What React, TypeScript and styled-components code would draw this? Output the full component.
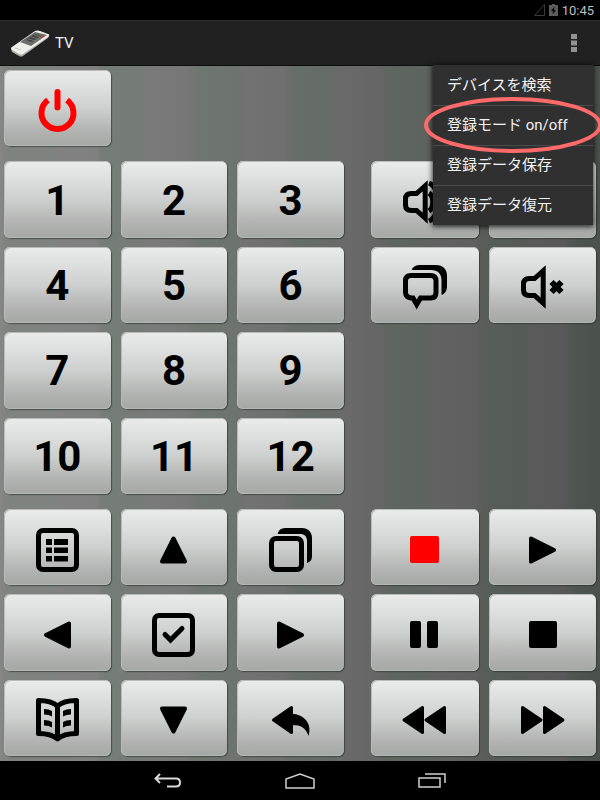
import React from "react";
import styled, { createGlobalStyle } from "styled-components";

const GlobalStyle = createGlobalStyle`
  * { box-sizing: border-box; }
  body {
    margin: 0;
    background: #000;
    font-family: Roboto, "Noto Sans CJK JP", sans-serif;
  }
  button { font-family: inherit; padding: 0; border: 0; background: none; cursor: pointer; }
  svg { display: block; }
`;

const Page = styled.div`
  display: flex;
  flex-direction: column;
  min-height: 100vh;
  overflow: hidden;
`;

const StatusBar = styled.div`
  display: flex;
  align-items: center;
  justify-content: flex-end;
  gap: 4px;
  height: 20px;
  padding-right: 6px;
  background: #000;
  color: #bdbdbd;
  font-size: 13px;
`;

const ActionBar = styled.header`
  position: relative;
  z-index: 1;
  display: flex;
  align-items: center;
  height: 46px;
  padding: 0 14px 0 11px;
  gap: 5px;
  background: #212121;
  border-top: 1px solid #2b2f2f;
  border-bottom: 1px solid #0c0e0d;
`;

const Title = styled.h1`
  flex: 1;
  margin: 0;
  color: #f0f0f0;
  font-size: 15px;
  font-weight: 400;
`;

const OverflowButton = styled.button`
  display: flex;
  align-items: center;
  justify-content: center;
  width: 24px;
  height: 40px;
`;

const Menu = styled.div`
  position: absolute;
  top: 100%;
  right: 7px;
  width: 160px;
  background: #303030;
  box-shadow: 0 1px 5px 1px rgba(0, 0, 0, 0.75);
`;

const MenuItem = styled.button`
  position: relative;
  display: block;
  width: 100%;
  height: 40px;
  padding: 0 0 2px 14px;
  border-top: 1px solid transparent;
  color: #f2f2f2;
  font-size: 15px;
  line-height: 20px;
  text-align: left;
  & + & { border-top-color: #4a4a4a; }
`;

const Ring = styled.svg`
  position: absolute;
  z-index: 1;
  left: -10px;
  top: -10px;
  pointer-events: none;
`;

const Remote = styled.main`
  flex: 1;
  display: flex;
  flex-direction: column;
  gap: 15px;
  padding: 4px 4px 5px;
  background: linear-gradient(
    90deg,
    #868686 0%, #7e837f 1%, #7e837f 8%, #818181 9%, #808080 16%,
    #767c78 17%, #757b77 23%, #7a7a7a 25%, #777777 31%,
    #6f756f 33%, #6d736e 39%, #727272 41%, #6f6f6f 47%,
    #676d68 49%, #656b66 55%, #6a6a6a 57%, #666666 63%,
    #5f655f 65%, #5d635e 71%, #626262 73%, #5f5f5f 79%,
    #575d58 81%, #555b56 87%, #5a5a5a 89%, #585858 94%,
    #4e5550 96%, #4b524d 100%
  );
`;

const Section = styled.section<{ $rows: number }>`
  flex: ${(p) => p.$rows} 0 ${(p) => (p.$rows - 1) * 9}px;
  display: grid;
  grid-template-columns: 340fr 225fr;
  column-gap: 27px;
`;

const Pad = styled.div<{ $cols: number; $rows: number }>`
  display: grid;
  grid-template-columns: repeat(${(p) => p.$cols}, 1fr);
  grid-template-rows: repeat(${(p) => p.$rows}, minmax(60px, 1fr));
  gap: 9px 10px;
`;

const Key = styled.button<{ $icon?: boolean }>`
  display: flex;
  align-items: center;
  justify-content: center;
  padding-top: ${(p) => (p.$icon ? 6 : 2)}px;
  border-radius: 6px;
  background: linear-gradient(#e9ecea, #dcdfdd 24%, #cdd0ce 50%, #b2b3b2 80%, #a4a8a5);
  box-shadow: inset 1px 1px 0 #b9bab9, inset 0 -1px 0 #b4b8b5, 1px 1px 1px rgba(40, 45, 42, 0.6);
  color: #000;
  font-size: 42px;
  line-height: 48px;
  font-weight: 700;
`;

const NavBar = styled.nav`
  display: flex;
  justify-content: center;
  height: 39px;
  background: #000;
`;

const NavButton = styled.button`
  display: flex;
  align-items: center;
  justify-content: center;
  width: 132px;
  height: 39px;
`;

const Glyph = ({ children }: { children: React.ReactNode }) => (
  <svg width="45" height="45" viewBox="0 0 45 45" aria-hidden="true">{children}</svg>
);

const line = { fill: "none", stroke: "#000", strokeWidth: 5 } as const;
const solid = { fill: "#000", stroke: "#000", strokeLinejoin: "round" } as const;

const Triangle = ({ turn }: { turn: number }) => (
  <Glyph>
    <path {...solid} strokeWidth="4" d="M22.5 10.5L34 33.5H11Z" transform={`rotate(${turn} 22.5 22)`} />
  </Glyph>
);

const speaker = (
  <path {...line} d="M23.2 5.8L14.5 13.5H9.5Q3.5 13.5 3.5 19V25Q3.5 30.5 9.5 30.5H14.5L23.2 38.2Z" />
);

const icons = {
  power: (
    <Glyph>
      <path d="M13 11.2A16 16 0 1 0 32 11.2" fill="none" stroke="#f00" strokeWidth="6" />
      <path d="M22.5 3V18.5" stroke="#f00" strokeWidth="6" strokeLinecap="round" />
    </Glyph>
  ),
  volumeUp: (
    <Glyph>
      {speaker}
      <path {...line} d="M27 3C39 8 39 36 27 41M27 13C32 16 32 28 27 31" />
    </Glyph>
  ),
  volumeDown: (
    <Glyph>
      {speaker}
      <path {...line} d="M29 13C34 16 34 28 29 31" />
    </Glyph>
  ),
  mute: (
    <Glyph>
      {speaker}
      <path {...line} strokeWidth="6" d="M31.5 17L41.5 27M41.5 17L31.5 27" />
    </Glyph>
  ),
  chat: (
    <Glyph>
      <path d="M9.5 5C11 1.5 14 0 18 0H34C41 0 45 4 45 11V21C45 26 43 28.5 39.5 30V15C39.5 9 36 5 29 5Z" />
      <path {...line} d="M9 10.5H28.5Q34 10.5 34 16V27.5Q34 33 28.5 33H18.5L14.7 39.5L11 33H9Q3.5 32 3.5 27.5V16Q3.5 10.5 9 10.5Z" />
    </Glyph>
  ),
  list: (
    <Glyph>
      <rect {...line} x="3.5" y="2.5" width="38" height="39" rx="4.5" />
      <path d="M11 11h6v6h-6zM19 11h14v6h-14zM11 19.5h6v5.5h-6zM19 19.5h14v5.5h-14zM11 28h6v5.5h-6zM19 28h14v5.5h-14z" />
    </Glyph>
  ),
  check: (
    <Glyph>
      <rect {...line} x="3.5" y="2.5" width="38" height="39" rx="4.5" />
      <path {...line} strokeLinecap="round" d="M14 21.5L19.5 27L31 15.5" />
    </Glyph>
  ),
  windows: (
    <Glyph>
      <path d="M9.5 6C10.5 2 13 0 17 0H34C40 0 44 4 44 10V28C44 32 42 34 39 35V13C39 8.5 36.5 6 32 6Z" />
      <rect {...line} x="3.5" y="10.5" width="30" height="31" rx="4.5" />
    </Glyph>
  ),
  record: <Glyph><rect x="8" y="8" width="29" height="27" rx="2" fill="#f00" /></Glyph>,
  stop: <Glyph><rect x="9" y="8" width="28" height="27" rx="2" /></Glyph>,
  pause: (
    <Glyph>
      <rect x="8" y="8" width="11" height="27" rx="2" />
      <rect x="25" y="8" width="11" height="27" rx="2" />
    </Glyph>
  ),
  book: (
    <Glyph>
      <path {...line} strokeLinejoin="round" d="M3.5 2.5C10 2.5 17 3 22.5 8C28 3 35 2.5 41.5 2.5V35.5C35 35.5 28 36 22.5 41C17 36 10 35.5 3.5 35.5ZM22.5 8V40" />
      <path d="M9 11Q14 11 17 13V18.5Q14 16.5 9 16.5ZM9 22Q14 22 17 24V29.5Q14 27.5 9 27.5ZM36 11Q31 11 28 13V18.5Q31 16.5 36 16.5ZM36 22Q31 22 28 24V29.5Q31 27.5 36 27.5Z" />
    </Glyph>
  ),
  back: (
    <Glyph>
      <path {...solid} strokeWidth="3" d="M5.5 22L23.5 9.5V34.5Z" />
      <path d="M24 16C34 16 45 24 40.5 38C38 30 33 27 24 27Z" />
    </Glyph>
  ),
  rewind: (
    <Glyph>
      <path {...solid} strokeWidth="3" d="M2 22L20.5 9.5V34.5ZM24 22L42.5 9.5V34.5Z" />
    </Glyph>
  ),
  forward: (
    <Glyph>
      <path {...solid} strokeWidth="3" d="M43 22L24.5 9.5V34.5ZM21 22L2.5 9.5V34.5Z" />
    </Glyph>
  ),
};

type KeyDef = [label: string, icon: React.ReactNode];

const audioKeys: KeyDef[] = [
  ["Volume up", icons.volumeUp],
  ["Volume down", icons.volumeDown],
  ["Subtitles", icons.chat],
  ["Mute", icons.mute],
];

const cursorKeys: KeyDef[] = [
  ["Menu", icons.list],
  ["Up", <Triangle turn={0} />],
  ["Windows", icons.windows],
  ["Left", <Triangle turn={-90} />],
  ["OK", icons.check],
  ["Right", <Triangle turn={90} />],
  ["Guide", icons.book],
  ["Down", <Triangle turn={180} />],
  ["Return", icons.back],
];

const playerKeys: KeyDef[] = [
  ["Record", icons.record],
  ["Play", <Triangle turn={90} />],
  ["Pause", icons.pause],
  ["Stop", icons.stop],
  ["Rewind", icons.rewind],
  ["Fast forward", icons.forward],
];

const IconKeys = ({ keys }: { keys: KeyDef[] }) => (
  <>
    {keys.map(([label, icon]) => (
      <Key key={label} $icon aria-label={label}>{icon}</Key>
    ))}
  </>
);

const RemoteLogo = () => (
  <svg width="39" height="27" viewBox="0 0 39 27" aria-hidden="true">
    <path d="M13 26L36 9L38 6L30 14Z" fill="#050505" />
    <path d="M0 19L1 22L8 26Q10 27 12 26L37 8Q39 6 38 4Z" fill="#a9aaa5" />
    <path d="M1 17L24 1Q26 0 29 1L37 4Q39 5 37 7L12 24Q10 25 8 24L1 20Q-1 18 1 17Z" fill="#eeeeea" />
    <path d="M9 12L24 2L36 5L20 16Z" fill="#6d6e6b" />
    <path d="M15 10L24 4L30 6L21 12Z" fill="#3c3d3b" />
    <path d="M17 9L26 11M20 7L28 9M23 5L29 7" stroke="#777875" />
    <path d="M30 6L33 5V7L30 8Z" fill="#e0392f" />
    <path d="M4 18L10 20" stroke="#c6c7c2" />
  </svg>
);

const menuItems = ["デバイスを検索", "登録モード on/off", "登録データ保存", "登録データ復元"];

export default function App() {
  return (
    <>
      <GlobalStyle />
      <Page>
        <StatusBar>
          <svg width="11" height="12" viewBox="0 0 11 12" aria-hidden="true">
            <path d="M10.5 0.5V11.5H0.5Z" fill="none" stroke="#3a3a3a" />
          </svg>
          <svg width="9" height="12" viewBox="0 0 9 12" aria-hidden="true">
            <path d="M3 0H6V1H9V12H0V1H3Z" fill="#5c5c5c" />
            <path d="M5.5 2.5L2 7H4L3.5 10.5L7 6H5Z" fill="#0a0a0a" />
          </svg>
          <span>10:45</span>
        </StatusBar>
        <ActionBar>
          <RemoteLogo />
          <Title>TV</Title>
          <OverflowButton aria-label="More options">
            <svg width="6" height="18" viewBox="0 0 6 18" aria-hidden="true">
              <path d="M0 0h6v5h-6zM0 6.5h6v5h-6zM0 13h6v5h-6z" fill="#919191" />
            </svg>
          </OverflowButton>
          <Menu role="menu">
            {menuItems.map((text, i) => (
              <MenuItem key={text} role="menuitem">
                {text}
                {i === 1 && (
                  <Ring width="180" height="58" viewBox="0 0 180 58" aria-hidden="true">
                    <ellipse cx="90" cy="29" rx="87" ry="26" fill="none" stroke="#ff6b6b" strokeWidth="4" />
                  </Ring>
                )}
              </MenuItem>
            ))}
          </Menu>
        </ActionBar>
        <Remote>
          <Section $rows={1}>
            <Pad $cols={3} $rows={1}>
              <Key $icon aria-label="Power">{icons.power}</Key>
            </Pad>
          </Section>
          <Section $rows={4}>
            <Pad $cols={3} $rows={4}>
              {Array.from({ length: 12 }, (_, i) => <Key key={i}>{i + 1}</Key>)}
            </Pad>
            <Pad $cols={2} $rows={4}>
              <IconKeys keys={audioKeys} />
            </Pad>
          </Section>
          <Section $rows={3}>
            <Pad $cols={3} $rows={3}>
              <IconKeys keys={cursorKeys} />
            </Pad>
            <Pad $cols={2} $rows={3}>
              <IconKeys keys={playerKeys} />
            </Pad>
          </Section>
        </Remote>
        <NavBar>
          <NavButton aria-label="Back">
            <svg width="28" height="16" viewBox="0 0 28 16" aria-hidden="true">
              <path d="M6 1L1.5 5.5L6 10M2 5.5H22Q26 5.5 26 9.5T22 13.5H13" fill="none" stroke="#d8d8d8" strokeWidth="2" />
            </svg>
          </NavButton>
          <NavButton aria-label="Home">
            <svg width="30" height="16" viewBox="0 0 30 16" aria-hidden="true">
              <path d="M1 15V6L15 1L29 6V15Z" fill="none" stroke="#d0d0d0" strokeWidth="1.5" />
            </svg>
          </NavButton>
          <NavButton aria-label="Recent apps">
            <svg width="28" height="15" viewBox="0 0 28 15" aria-hidden="true">
              <path d="M1 5H22V14H1ZM7 1H27V10" fill="none" stroke="#d0d0d0" strokeWidth="1.5" />
            </svg>
          </NavButton>
        </NavBar>
      </Page>
    </>
  );
}
